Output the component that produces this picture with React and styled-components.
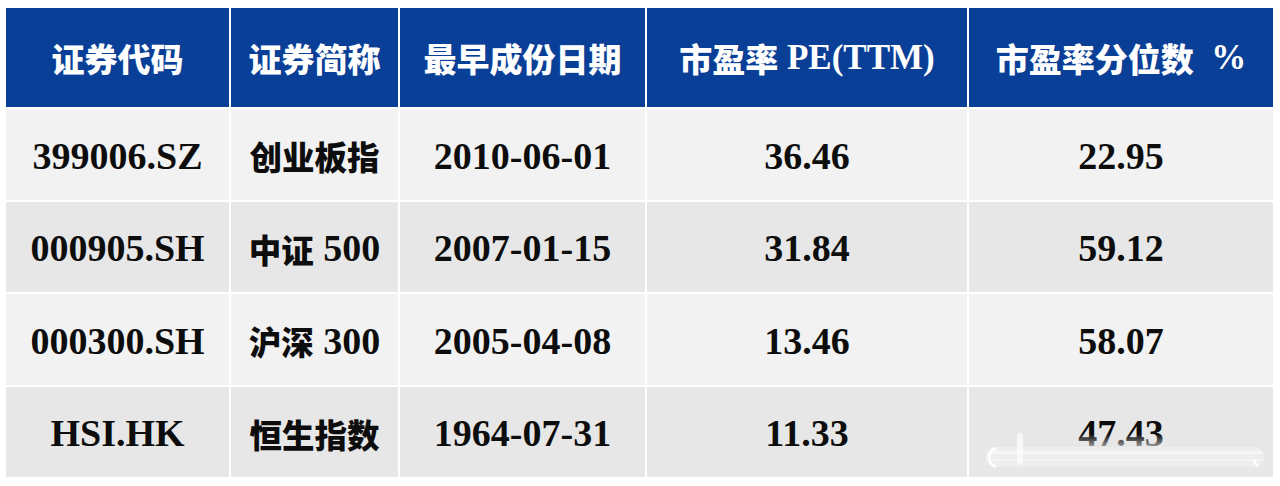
import React from "react";
import styled, { createGlobalStyle } from "styled-components";

const Global = createGlobalStyle`
  html, body { margin: 0; padding: 0; background: #ffffff; }
  body { font-family: "Liberation Serif", "Noto Sans CJK SC", serif; }
`;

const Page = styled.div`
  padding: 8px 7px 0 6px;
  width: 1280px;
  height: 486px;
  box-sizing: border-box;
  position: relative;
  overflow: hidden;
`;

const Grid = styled.div`
  display: grid;
  grid-template-columns: 223px 167px 245px 320px 304px;
  grid-template-rows: 99px repeat(4, 90.5px);
  gap: 2px;
  background: #ffffff;
`;

const HeadCell = styled.div`
  background: #0a3f97;
  color: #ffffff;
  display: flex;
  align-items: center;
  justify-content: center;
  font-family: "Liberation Serif", "Noto Sans CJK SC", serif;
  font-weight: 700;
  font-size: 35px;
  white-space: pre;
`;

const Cell = styled.div`
  background: ${(p) => (p.$alt ? "#e7e7e7" : "#f2f2f2")};
  color: #0d0d0d;
  display: flex;
  align-items: center;
  justify-content: center;
  font-family: "Liberation Serif", "Noto Sans CJK SC", serif;
  font-weight: 700;
  font-size: 38px;
  white-space: pre;
  padding-top: 3px;
  box-sizing: border-box;
`;

const Cjk = styled.span`
  font-family: "Noto Sans CJK SC", sans-serif;
  font-weight: 900;
  font-size: ${(p) => p.$size || "32.5px"};
`;

const Watermark = styled.svg`
  position: absolute;
  left: 980px;
  top: 420px;
  width: 290px;
  height: 60px;
  pointer-events: none;
`;

const headers = [
  [["c", "证券代码"]],
  [["c", "证券简称"]],
  [["c", "最早成份日期"]],
  [["c", "市盈率"], ["l", " PE(TTM)"]],
  [["c", "市盈率分位数"], ["l", "  %"]],
];

const rows = [
  ["399006.SZ", [["c", "创业板指"]], "2010-06-01", "36.46", "22.95"],
  ["000905.SH", [["c", "中证"], ["l", " 500"]], "2007-01-15", "31.84", "59.12"],
  ["000300.SH", [["c", "沪深"], ["l", " 300"]], "2005-04-08", "13.46", "58.07"],
  ["HSI.HK", [["c", "恒生指数"]], "1964-07-31", "11.33", "47.43"],
];

function Mixed({ parts, size }) {
  return parts.map(([k, t], i) =>
    k === "c" ? (
      <Cjk key={i} $size={size}>
        {t}
      </Cjk>
    ) : (
      <span key={i}>{t}</span>
    )
  );
}

export default function App() {
  return (
    <Page>
      <Global />
      <Grid>
        {headers.map((h, i) => (
          <HeadCell key={i}>
            <Mixed parts={h} size="33px" />
          </HeadCell>
        ))}
        {rows.map((r, i) =>
          r.map((v, j) => (
            <Cell key={i + "-" + j} $alt={i % 2 === 1}>
              {Array.isArray(v) ? <Mixed parts={v} size="32.5px" /> : v}
            </Cell>
          ))
        )}
      </Grid>
      <Watermark viewBox="0 0 290 60">
        <defs>
          <linearGradient id="fade" x1="0" y1="0" x2="0" y2="1">
            <stop offset="0" stopColor="#e7e7e7" stopOpacity="0" />
            <stop offset="0.35" stopColor="#e7e7e7" stopOpacity="0.75" />
            <stop offset="1" stopColor="#e7e7e7" stopOpacity="0.55" />
          </linearGradient>
        </defs>
        <rect x="95" y="14" width="95" height="42" fill="url(#fade)" />
        <rect x="5" y="27" width="280" height="20" rx="10" fill="#ffffff" opacity="0.3" />
        <rect x="12" y="31" width="270" height="3" fill="#ffffff" opacity="0.45" />
        <rect x="12" y="39" width="270" height="2" fill="#ffffff" opacity="0.35" />
        <rect x="37" y="13" width="6" height="32" rx="3" fill="#ffffff" opacity="0.65" />
        <path d="M16 28 a10 10 0 0 0 0 19" stroke="#ffffff" strokeWidth="3" fill="none" opacity="0.9" />
        <path d="M278 47 l-5 -7" stroke="#ffffff" strokeWidth="2.5" fill="none" opacity="0.85" />
      </Watermark>
    </Page>
  );
}
